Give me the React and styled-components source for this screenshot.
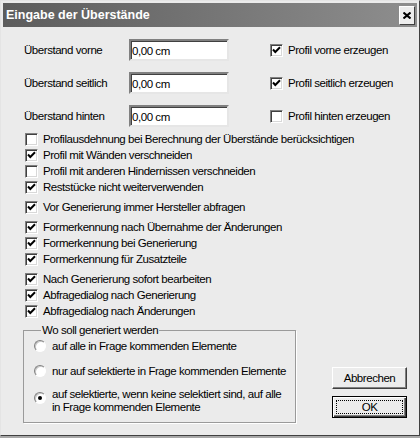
import React from "react";
import styled, { createGlobalStyle } from "styled-components";

const GlobalStyle = createGlobalStyle`
  html, body {
    margin: 0;
    padding: 0;
    background: #a8a8a8;
  }
  body {
    font-family: "Liberation Sans", Arial, sans-serif;
    font-size: 11.5px;
    letter-spacing: -0.45px;
    color: #000;
  }
`;

const Window = styled.div`
  box-sizing: border-box;
  width: 420px;
  height: 436px;
  background: #ebebeb;
  border: 1px solid;
  border-color: #e4e4e4 #404040 #404040 #e4e4e4;
  padding: 2px;
  display: flex;
  flex-direction: column;
`;

const TitleBar = styled.div`
  height: 24px;
  flex: none;
  display: flex;
  align-items: center;
  justify-content: space-between;
  padding: 0 2px 0 3px;
  background: linear-gradient(to right, #5c5c5c, #8e8e8e);
`;

const Title = styled.span`
  font-weight: bold;
  font-size: 12.5px;
  letter-spacing: 0;
  color: #fff;
`;

const CloseButton = styled.div`
  box-sizing: border-box;
  width: 16px;
  height: 19px;
  background: #ededed;
  border: 1px solid;
  border-color: #fff #404040 #404040 #fff;
  display: flex;
  align-items: center;
  justify-content: center;
`;

const Body = styled.div`
  flex: 1;
  padding: 12px 10px 0 21px;
  white-space: nowrap;
`;

const FieldRow = styled.div`
  display: grid;
  grid-template-columns: 105px 100px 1fr;
  align-items: center;
  height: 22px;
  margin-bottom: 11px;
`;

const TextInput = styled.div`
  box-sizing: border-box;
  height: 22px;
  background: #fff;
  border: 2px solid;
  border-color: #808080 #e6e6e6 #e6e6e6 #808080;
  box-shadow: inset 1px 1px 0 #404040;
  padding: 1px 0 0 1px;
  display: flex;
  align-items: center;
`;

const RightCheck = styled.label`
  display: flex;
  align-items: center;
  gap: 5px;
  margin-left: 41px;
`;

const CheckGroup = styled.div`
  margin-top: ${(p) => p.$gap}px;
`;

const CheckRow = styled.label`
  display: flex;
  align-items: center;
  gap: 5px;
  height: 16px;
  padding-left: 1px;
`;

const Box = styled.span`
  box-sizing: border-box;
  width: 13px;
  height: 13px;
  flex: none;
  background: #fff;
  border: 1px solid;
  border-color: #808080 #fff #fff #808080;
  box-shadow: inset 1px 1px 0 #404040, inset -1px -1px 0 #d8d8d8;
  display: flex;
  align-items: center;
  justify-content: center;
`;

const Bottom = styled.div`
  display: flex;
  align-items: flex-end;
  margin-top: 3px;
  margin-left: -1px;
`;

const GroupBox = styled.fieldset`
  box-sizing: border-box;
  width: 274px;
  margin: 0;
  padding: 0 8px 8px 10px;
  border: 1px solid #9a9a9a;
  box-shadow: 1px 1px 0 #fff;
  display: flex;
  flex-direction: column;
  gap: 9px;
`;

const Legend = styled.legend`
  padding: 0 1px;
  margin-left: 7px;
  line-height: 16px;
`;

const RadioRow = styled.label`
  display: flex;
  align-items: flex-start;
  gap: 6px;
  line-height: ${(p) => (p.$multi ? 13 : 16)}px;
`;

const Circle = styled.span`
  box-sizing: border-box;
  width: 12px;
  height: 12px;
  flex: none;
  margin-top: ${(p) => (p.$multi ? 4 : 2)}px;
  border-radius: 50%;
  background: #fff;
  border: 1px solid;
  border-color: #808080 #fff #fff #808080;
  box-shadow: inset 1px 1px 0 #c8c8c8;
  display: flex;
  align-items: center;
  justify-content: center;
`;

const Dot = styled.span`
  width: 4px;
  height: 4px;
  border-radius: 50%;
  background: #000;
`;

const ButtonColumn = styled.div`
  display: flex;
  flex-direction: column;
  gap: 7px;
  margin-left: 36px;
  margin-bottom: 5px;
`;

const Button = styled.div`
  box-sizing: border-box;
  width: 75px;
  height: 22px;
  background: #ececec;
  border: 1px solid;
  border-color: ${(p) => (p.$default ? "#000" : "#fff #404040 #404040 #fff")};
  box-shadow: ${(p) =>
    p.$default
      ? "inset 1px 1px 0 #fff, inset -1px -1px 0 #404040, inset -2px -2px 0 #808080"
      : "inset -1px -1px 0 #808080"};
  display: flex;
  align-items: center;
  justify-content: center;
  padding: ${(p) => (p.$default ? "3px" : "0")};
`;

const FocusRing = styled.span`
  flex: 1;
  align-self: stretch;
  display: flex;
  align-items: center;
  justify-content: center;
  border: 1px dotted #000;
`;

const Check = ({ on }) => (
  <Box>
    {on && (
      <svg width="9" height="9" viewBox="0 0 9 9">
        <path d="M1 3.5 L3.3 6 L8 1.3" fill="none" stroke="#000" strokeWidth="2" />
      </svg>
    )}
  </Box>
);

const fields = [
  ["Überstand vorne", "Profil vorne erzeugen", true],
  ["Überstand seitlich", "Profil seitlich erzeugen", true],
  ["Überstand hinten", "Profil hinten erzeugen", false],
];

const groups = [
  [
    ["Profilausdehnung bei Berechnung der Überstände berücksichtigen", false],
    ["Profil mit Wänden verschneiden", true],
    ["Profil mit anderen Hindernissen verschneiden", false],
    ["Reststücke nicht weiterverwenden", true],
  ],
  [["Vor Generierung immer Hersteller abfragen", true]],
  [
    ["Formerkennung nach Übernahme der Änderungen", true],
    ["Formerkennung bei Generierung", true],
    ["Formerkennung für Zusatzteile", true],
  ],
  [
    ["Nach Generierung sofort bearbeiten", true],
    ["Abfragedialog nach Generierung", true],
    ["Abfragedialog nach Änderungen", true],
  ],
];

export default function App() {
  return (
    <>
      <GlobalStyle />
      <Window>
        <TitleBar>
          <Title>Eingabe der Überstände</Title>
          <CloseButton>
            <svg width="8" height="7" viewBox="0 0 8 7">
              <path d="M0.5 0.5 L7.5 6.5 M7.5 0.5 L0.5 6.5" stroke="#000" strokeWidth="2" />
            </svg>
          </CloseButton>
        </TitleBar>
        <Body>
          {fields.map(([label, check, on]) => (
            <FieldRow key={label}>
              <span>{label}</span>
              <TextInput>0,00 cm</TextInput>
              <RightCheck>
                <Check on={on} />
                {check}
              </RightCheck>
            </FieldRow>
          ))}
          {groups.map((rows, i) => (
            <CheckGroup key={i} $gap={i === 0 ? -7 : 4}>
              {rows.map(([text, on]) => (
                <CheckRow key={text}>
                  <Check on={on} />
                  {text}
                </CheckRow>
              ))}
            </CheckGroup>
          ))}
          <Bottom>
            <GroupBox>
              <Legend>Wo soll generiert werden</Legend>
              <RadioRow>
                <Circle />
                auf alle in Frage kommenden Elemente
              </RadioRow>
              <RadioRow>
                <Circle />
                nur auf selektierte in Frage kommenden Elemente
              </RadioRow>
              <RadioRow $multi>
                <Circle $multi>
                  <Dot />
                </Circle>
                <span>
                  auf selektierte, wenn keine selektiert sind, auf alle
                  <br />
                  in Frage kommenden Elemente
                </span>
              </RadioRow>
            </GroupBox>
            <ButtonColumn>
              <Button>Abbrechen</Button>
              <Button $default>
                <FocusRing>OK</FocusRing>
              </Button>
            </ButtonColumn>
          </Bottom>
        </Body>
      </Window>
    </>
  );
}
